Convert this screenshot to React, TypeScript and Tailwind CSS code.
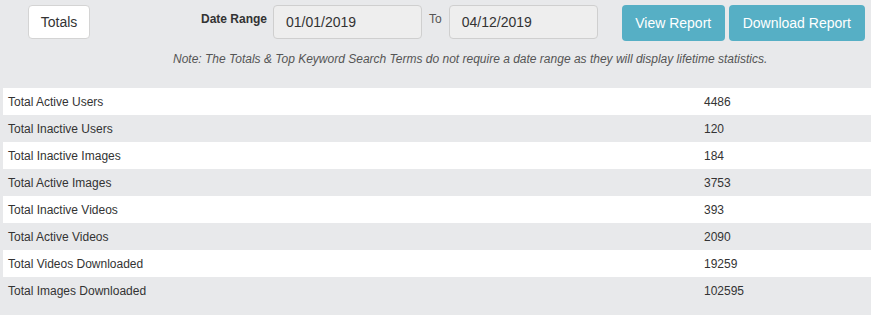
import React from "react";

const rows: [string, string][] = [
  ["Total Active Users", "4486"],
  ["Total Inactive Users", "120"],
  ["Total Inactive Images", "184"],
  ["Total Active Images", "3753"],
  ["Total Inactive Videos", "393"],
  ["Total Active Videos", "2090"],
  ["Total Videos Downloaded", "19259"],
  ["Total Images Downloaded", "102595"],
];

export default function App() {
  return (
    <div
      className="w-[871px] h-[315px] bg-[#e8e9eb] text-[#333] overflow-hidden"
      style={{ fontFamily: '"Liberation Sans", Arial, sans-serif' }}
    >
      <div className="flex items-start pt-[5px]">
        <button className="ml-[28px] w-[62px] h-[34px] bg-white border border-[#d4d4d4] rounded-[4px] text-[14px] text-[#333]">
          Totals
        </button>
        <span className="ml-[111px] mt-[6px] text-[12px] font-bold text-[#333] leading-[16px]">
          Date Range
        </span>
        <div className="ml-[6px] w-[149px] h-[34px] bg-[#eeeeee] border border-[#cfcfcf] rounded-[4px] pl-[12px] flex items-center text-[14px] text-[#333]">
          01/01/2019
        </div>
        <span className="ml-[7px] mt-[6px] text-[12px] text-[#555] leading-[16px]">To</span>
        <div className="ml-[7px] w-[149px] h-[34px] bg-[#eeeeee] border border-[#cfcfcf] rounded-[4px] pl-[12px] flex items-center text-[14px] text-[#333]">
          04/12/2019
        </div>
        <button className="ml-[24px] w-[103px] h-[36px] bg-[#56afc5] rounded-[4px] text-[14px] text-white">
          View Report
        </button>
        <button className="ml-[4px] w-[136px] h-[36px] bg-[#56afc5] rounded-[4px] text-[14px] text-white">
          Download Report
        </button>
      </div>
      <div className="mt-[10px] ml-[173px] text-[12px] italic text-[#555] leading-[16px]">
        Note: The Totals &amp; Top Keyword Search Terms do not require a date range as they will display lifetime statistics.
      </div>
      <div className="ml-[3px] mt-[21px]">
        {rows.map(([label, value], i) => (
          <div
            key={label}
            className={`flex h-[27px] items-center text-[12px] text-[#333] ${i % 2 === 0 ? "bg-white" : "bg-[#e8e9eb]"}`}
          >
            <div className="w-[696px] pl-[5px]">{label}</div>
            <div className="pl-[5px]">{value}</div>
          </div>
        ))}
      </div>
    </div>
  );
}
